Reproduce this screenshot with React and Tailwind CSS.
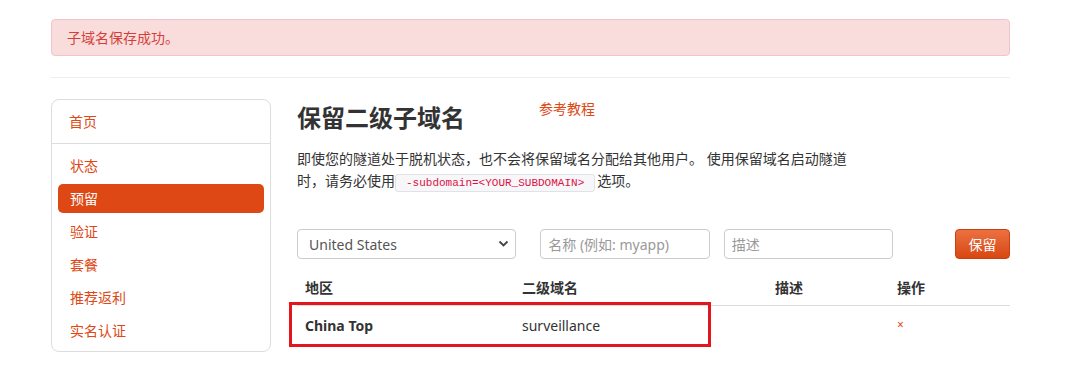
import React from "react";

const font = { fontFamily: '"Noto Sans", "Noto Sans CJK SC", sans-serif' };

function SideItem({ label, active }) {
  return (
    <div
      className={
        "mx-[6px] h-[29px] rounded-[5px] pl-[12px] flex items-center text-[14px] " +
        (active ? "bg-[#dd4814] text-white" : "text-[#dd4814]")
      }
    >
      {label}
    </div>
  );
}

export default function App() {
  return (
    <div className="w-[1083px] h-[386px] bg-white text-[#333]" style={font}>
      <div className="ml-[51px] w-[959px] pt-[19px]">
        <div className="h-[37px] rounded-[4px] border border-[#f5c2c7] bg-[#f9dddd] pl-[15px] flex items-center text-[14px] text-[#d43f3a]">
          子域名保存成功。
        </div>
        <div className="mt-[21px] h-px bg-[#eeeeee]" />
        <div className="mt-[21px] flex">
          <div className="w-[220px] h-[253px] rounded-[8px] border border-[#dddddd] flex flex-col">
            <div className="h-[43px] pl-[17px] flex items-center text-[14px] text-[#dd4814]">首页</div>
            <div className="h-px bg-[#dddddd]" />
            <div className="pt-[7px] flex flex-col gap-[4px]">
              <SideItem label="状态" />
              <SideItem label="预留" active />
              <SideItem label="验证" />
              <SideItem label="套餐" />
              <SideItem label="推荐返利" />
              <SideItem label="实名认证" />
            </div>
          </div>
          <div className="ml-[26px] w-[713px]">
            <div className="flex items-start">
              <h1 className="mt-[2px] text-[24px] leading-[34px] font-bold text-[#333]">保留二级子域名</h1>
              <a className="ml-[74px] mt-[0px] text-[14px] leading-[20px] text-[#dd4814]">参考教程</a>
            </div>
            <p className="mt-[13px] w-[560px] text-[14px] leading-[22px] text-[#333]">
              即使您的隧道处于脱机状态，也不会将保留域名分配给其他用户。 使用保留域名启动隧道时，请务必使用
              <code
                className="mr-[2px] rounded-[3px] border border-[#e1e1e8] bg-[#f7f7f9] px-[10px] py-[2px] text-[#dd1144]"
                style={{ fontFamily: '"Liberation Mono", monospace', fontSize: "11px" }}
              >
                -subdomain=&lt;YOUR_SUBDOMAIN&gt;
              </code>
              选项。
            </p>
            <div className="mt-[35px] flex items-center">
              <div className="relative w-[220px] h-[30px] rounded-[4px] border border-[#cccccc] flex items-center pl-[11px] text-[14px] text-[#555]">
                United States
                <svg className="absolute right-[6px] top-[10px]" width="11" height="8" viewBox="0 0 11 8">
                  <path d="M1.5 1.5 L5.5 5.5 L9.5 1.5" fill="none" stroke="#444" strokeWidth="1.8" />
                </svg>
              </div>
              <div className="ml-[24px] w-[170px] h-[30px] rounded-[4px] border border-[#cccccc] flex items-center pl-[7px] text-[14px] text-[#999]">
                名称 (例如: myapp)
              </div>
              <div className="ml-[14px] w-[170px] h-[30px] rounded-[4px] border border-[#cccccc] flex items-center pl-[7px] text-[14px] text-[#999]">
                描述
              </div>
              <button className="ml-[62px] w-[55px] h-[30px] rounded-[4px] bg-gradient-to-b from-[#ec7040] to-[#d8470f] border border-[#c9400f] text-white text-[14px]">
                保留
              </button>
            </div>
            <div className="mt-[17px] flex h-[30px] items-start pt-[2px] border-b border-[#dddddd] text-[14px] leading-[20px] font-bold text-[#333]">
              <div className="w-[217px] pl-[8px]">地区</div>
              <div className="w-[253px] pl-[8px]">二级域名</div>
              <div className="w-[122px] pl-[8px]">描述</div>
              <div className="w-[121px] pl-[8px]">操作</div>
            </div>
            <div className="relative flex h-[38px] items-center text-[14px] text-[#333]">
              <div className="w-[217px] pl-[8px] font-bold">China Top</div>
              <div className="w-[253px] pl-[8px]">surveillance</div>
              <div className="w-[122px] pl-[8px]"></div>
              <div className="w-[121px] pl-[8px] text-[12px] text-[#dd4814]">×</div>
              <div className="absolute left-[-8px] top-[-4px] w-[422px] h-[45px] border-[3px] border-[#e3161d]" />
            </div>
          </div>
        </div>
      </div>
    </div>
  );
}
